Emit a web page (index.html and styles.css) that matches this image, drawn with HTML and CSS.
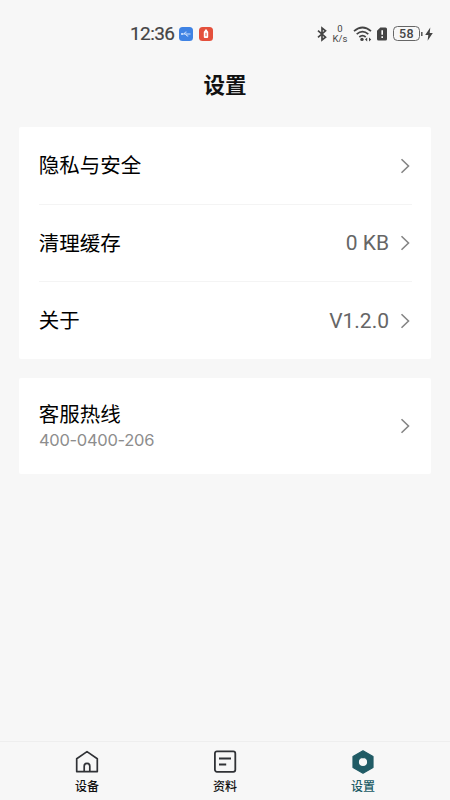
FILE: index.html
```html
<!DOCTYPE html>
<html lang="zh-CN">
<head>
<meta charset="utf-8">
<meta name="viewport" content="width=device-width, initial-scale=1">
<title>设置</title>
<link rel="stylesheet" href="styles.css">
</head>
<body>
<div class="screen">
  <header class="status">
    <div class="status-left">
      <span class="clock">12:36</span>
      <svg class="app-icon" viewBox="0 0 14 14"><rect width="14" height="14" rx="3.5" fill="#3f83e4"/><path d="M2.5 7h9M5 7l1.5-2h1M6.5 7L8 9h1.3" fill="none" stroke="#dceaff" stroke-width=".9"/><circle cx="3" cy="7" r=".9" fill="#dceaff"/></svg>
      <svg class="app-icon" viewBox="0 0 14 14"><rect width="14" height="14" rx="3.5" fill="#e4503c"/><rect x="4.8" y="4" width="4.4" height="7" rx="1" fill="#fff"/><rect x="5.8" y="2.6" width="2.4" height="2" rx=".6" fill="#fff"/><path d="M7 5.8v3.4" stroke="#e4503c" stroke-width="1"/></svg>
    </div>
    <div class="status-right">
      <svg class="bluetooth" viewBox="0 0 10 16"><path d="M1 4.700l7.500 6.500L5 14V2l3.500 2.800L1 11.300" fill="none" stroke="#444" stroke-width="1.700"/></svg>
      <div class="speed"><span>0</span><span>K/s</span></div>
      <svg class="wifi" viewBox="0 0 20 16"><g fill="none" stroke="#444" stroke-width="1.7"><path d="M1 5.2q8.5-7.4 17 0"/><path d="M3.7 8.2q5.8-5 11.6 0"/><path d="M6.3 11q3.2-2.8 6.4 0"/></g><circle cx="9" cy="13.4" r="1.7" fill="#444"/><path d="M12 13.400l2.200-2v4zM18.200 13.400l-2.200-2v4z" fill="#444"/></svg>
      <svg class="sim" viewBox="0 0 11 14"><path d="M3.8.5H9A1.5 1.5 0 0 1 10.500 2v10A1.500 1.500 0 0 1 9 13.500H2A1.500 1.500 0 0 1 .5 12V3.800z" fill="#444"/><path d="M5.700 3.300v4.500M5.700 9.300v1.700" stroke="#fff" stroke-width="1.600"/></svg>
      <div class="battery">58</div>
      <svg class="charge" viewBox="0 0 12 14"><path d="M.8 5v4" stroke="#555" stroke-width="1.500"/><path d="M9.300.5L4.200 8h3.100L6.600 13.700 11.800 6H8.700z" fill="#444"/></svg>
    </div>
  </header>
  <h1 class="title">设置</h1>
  <main class="content">
    <section class="card">
      <div class="row"><span class="label">隐私与安全</span><svg class="chevron" viewBox="0 0 10 16"><path d="M1.500 1.200L8.500 8l-7 6.800"/></svg></div>
      <div class="row"><span class="label">清理缓存</span><span class="value">0 KB</span><svg class="chevron" viewBox="0 0 10 16"><path d="M1.500 1.200L8.500 8l-7 6.800"/></svg></div>
      <div class="row"><span class="label">关于</span><span class="value">V1.2.0</span><svg class="chevron" viewBox="0 0 10 16"><path d="M1.500 1.200L8.500 8l-7 6.800"/></svg></div>
    </section>
    <section class="card hotline">
      <div class="contact"><span class="label">客服热线</span><span class="phone">400-0400-206</span></div>
      <svg class="chevron" viewBox="0 0 10 16"><path d="M1.500 1.200L8.500 8l-7 6.800"/></svg>
    </section>
  </main>
  <nav class="tabs">
    <a class="tab"><svg viewBox="0 0 24 24"><g fill="none" stroke="#303236" stroke-width="1.700" stroke-linejoin="round"><path d="M1.700 8.700L12 1.600l10.300 7.100v12.900H1.700z"/><path d="M9.200 21.500V16.200a2.800 2.800 0 0 1 5.600 0v5.300"/></g></svg><span>设备</span></a>
    <a class="tab"><svg viewBox="0 0 24 24"><g fill="none" stroke="#303236" stroke-width="1.800"><rect x="1.900" y="1.400" width="20.400" height="20.400" rx="2"/><path d="M6 8.500h12M6 14.500h7.200"/></g></svg><span>资料</span></a>
    <a class="tab active"><svg viewBox="0 0 24 24"><path fill-rule="evenodd" d="M12 .8l10 5.600v11.200l-10 5.600-10-5.600V6.400zM12 7.300a4.700 4.700 0 1 0 0 9.400 4.700 4.700 0 0 0 0-9.400z" fill="#205b65" stroke="#205b65" stroke-width="1.200" stroke-linejoin="round"/></svg><span>设置</span></a>
  </nav>
</div>
</body>
</html>
```
FILE: styles.css
```css
* { box-sizing: border-box; }
body {
  margin: 0;
  background: #f7f7f7;
  color: #111;
  font-family: "Noto Sans CJK SC", sans-serif;
}
.screen { height: 800px; display: flex; flex-direction: column; }
.status {
  height: 67px;
  padding: 0 17px 0 130px;
  display: flex;
  align-items: center;
  justify-content: space-between;
  color: #444;
  flex: none;
}
.status-left, .status-right { display: flex; align-items: center; }
.clock { font: 400 19px/24px Roboto, sans-serif; width: 49px; letter-spacing: -.6px; white-space: nowrap; -webkit-text-stroke: .2px #444; }
.app-icon { width: 14px; height: 14px; }
.app-icon + .app-icon { margin-left: 6px; }
.bluetooth { width: 10px; height: 16px; }
.speed { width: 16px; margin-left: 5px; display: flex; flex-direction: column; align-items: center; font: 400 9.500px/11px Roboto, sans-serif; }
.speed span + span { margin-top: -1px; }
.wifi { width: 20px; height: 16px; margin-left: 5px; }
.sim { width: 12px; height: 14px; margin-left: 3px; }
.battery { width: 27px; height: 15px; margin-left: 5px; border: 1.500px solid #666; border-radius: 4.500px; font: 500 12.500px/13px Roboto, sans-serif; letter-spacing: .3px; text-align: center; }
.charge { width: 12px; height: 14px; margin-left: 1px; }
.title { height: 60px; margin: 0; font-size: 21.500px; line-height: 33px; font-weight: 700; text-align: center; flex: none; }
.content { flex: 1; padding: 0 19px; display: flex; flex-direction: column; gap: 19px; }
.card { background: #fff; border-radius: 2px; padding: 0 19px 0 20px; }
.row { height: 77px; display: flex; align-items: center; }
.row:last-child { height: 78px; }
.row + .row { border-top: 1px solid #f4f4f4; }
.label { font-size: 20.500px; line-height: 28px; color: #000; margin: -3px 0 0 -.3px; }
.value { margin-left: auto; color: #666; font-family: Roboto, sans-serif; font-size: 21px; line-height: 28px; }
.chevron { width: 10px; height: 16px; margin-left: auto; margin-right: 2px; }
.value + .chevron { margin-left: 11px; }
.chevron path { fill: none; stroke: #858585; stroke-width: 1.600; }
.hotline { height: 96px; display: flex; align-items: center; }
.contact { display: flex; flex-direction: column; }
.contact .label { margin-top: -1px; }
.phone { padding-top: 1px; font-family: Inter, sans-serif; font-size: 16.500px; line-height: 24px; letter-spacing: -.3px; color: #8d8d8d; }
.tabs { height: 59px; padding: 0 18px; border-top: 1px solid #eee; display: grid; grid-template-columns: repeat(3, 1fr); flex: none; }
.tab { display: flex; flex-direction: column; align-items: center; padding-top: 8px; font-size: 12px; line-height: 18px; font-weight: 500; color: #111; }
.tab svg { width: 24px; height: 24px; margin-bottom: 3px; }
.tab.active { color: #205b65; }
```
